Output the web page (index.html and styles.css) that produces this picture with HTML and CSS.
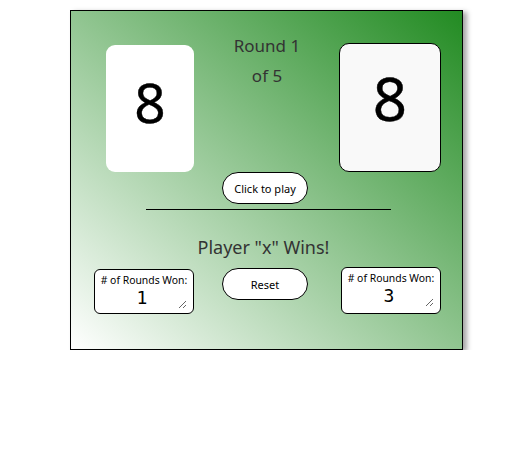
FILE: index.html
```html
<!DOCTYPE html>
<html lang="en">
<head>
<meta charset="utf-8">
<title>War</title>
<link rel="stylesheet" href="styles.css">
</head>
<body>
<div class="board">
  <div class="top">
    <div class="card card-left">8</div>
    <div class="round">
      <p>Round 1</p>
      <p>of 5</p>
    </div>
    <div class="card card-right">8</div>
  </div>
  <div class="play-row">
    <button class="pill">Click to play</button>
  </div>
  <hr class="divider">
  <h2 class="winner">Player "x" Wins!</h2>
  <div class="bottom">
    <div class="score score-left">
      <label class="score-label">#&nbsp;of Rounds Won:</label>
      <textarea class="score-num" rows="1" readonly>1</textarea>
    </div>
    <button class="pill reset">Reset</button>
    <div class="score score-right">
      <label class="score-label">#&nbsp;of Rounds Won:</label>
      <textarea class="score-num" rows="1" readonly>3</textarea>
    </div>
  </div>
</div>
</body>
</html>
```

FILE: styles.css
```css
* { box-sizing: border-box; }

body {
  margin: 0;
  background: #fff;
  font-family: "Noto Sans", "Open Sans", sans-serif;
}

.board {
  margin: 10px 0 0 70px;
  width: 393px;
  height: 340px;
  border: 1px solid #000;
  background: linear-gradient(to top right, #ffffff 0%, #228b22 100%);
  box-shadow: 4px 2px 5px rgba(0, 0, 0, 0.35);
}

.top,
.bottom {
  display: grid;
  grid-template-columns: 151px 86px 154px;
}

.top {
  padding-top: 20px;
  align-items: end;
}

.card {
  display: flex;
  align-items: center;
  justify-content: center;
  color: #000;
  line-height: 1;
  -webkit-text-stroke: 0.4px #000;
}

.card-left {
  margin-left: 35px;
  width: 88px;
  height: 127px;
  background: #fff;
  border-radius: 9px;
  font-size: 55px;
  padding-bottom: 15px;
}

.card-right {
  margin-left: 31px;
  margin-top: 12px;
  width: 102px;
  height: 129px;
  background: #f9f9f9;
  border: 1px solid #000;
  border-radius: 10px;
  font-size: 60px;
  padding-bottom: 20px;
}

.round {
  align-self: start;
  justify-self: center;
  white-space: nowrap;
  text-align: center;
  color: #333;
  font-size: 17px;
  line-height: 30px;
  margin-left: 4px;
}

.round p { margin: 0; }

.play-row {
  padding-left: 151px;
}

.pill {
  display: block;
  width: 86px;
  height: 32px;
  padding: 0;
  border: 1px solid #000;
  border-radius: 16px;
  background: #fff;
  color: #000;
  font-family: "Noto Sans", sans-serif;
  font-size: 11px;
}

.divider {
  margin: 5px 0 0 75px;
  width: 245px;
  height: 0;
  border: 0;
  border-top: 1px solid #000;
}

.winner {
  margin: 25px 0 0;
  padding-right: 6px;
  text-align: center;
  font-weight: normal;
  font-size: 18px;
  line-height: 24px;
  color: #333;
}

.bottom {
  margin-top: 8px;
  align-items: start;
}

.score {
  display: flex;
  flex-direction: column;
  align-items: center;
  width: 100px;
  background: #fff;
  border: 1px solid #000;
  border-radius: 6px;
  padding-top: 3px;
}

.score-left {
  margin-left: 23px;
  margin-top: 2px;
  height: 45px;
}

.score-right {
  margin-left: 33px;
  height: 47px;
}

.score-label {
  font-size: 10.4px;
  line-height: 14px;
  color: #000;
  white-space: nowrap;
}

.score-num {
  width: 90px;
  height: 22px;
  margin-left: -4px;
  padding: 0;
  border: 0;
  outline: none;
  background: transparent;
  text-align: center;
  font-family: "DejaVu Sans Mono", monospace;
  font-size: 18px;
  line-height: 22px;
  color: #000;
  overflow: hidden;
  resize: both;
}

.reset {
  margin-top: 1px;
}
```
